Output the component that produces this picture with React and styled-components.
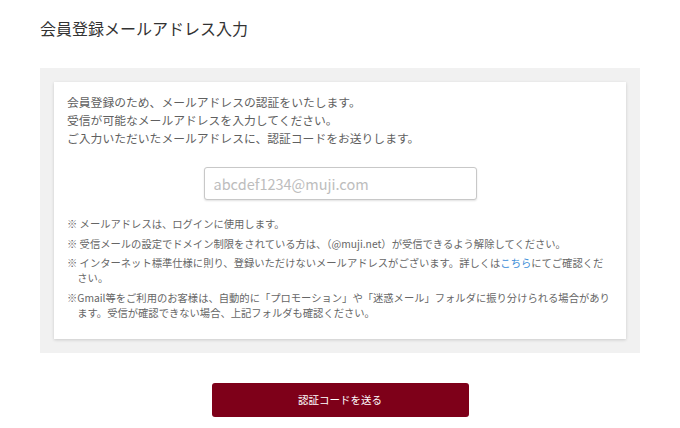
import React from "react";
import styled, { createGlobalStyle } from "styled-components";

const GlobalStyle = createGlobalStyle`
  html, body {
    margin: 0;
    padding: 0;
    background: #ffffff;
  }
  body {
    font-family: "Noto Sans CJK JP", "Noto Sans", sans-serif;
    color: #555555;
  }
`;

const Page = styled.div`
  width: 600px;
  padding: 16px 40px 0;
`;

const Title = styled.h1`
  margin: 0;
  font-size: 16px;
  line-height: 24px;
  font-weight: 400;
  color: #333333;
`;

const Panel = styled.section`
  margin-top: 28px;
  padding: 14px;
  background: #f1f1f1;
`;

const Card = styled.div`
  background: #ffffff;
  padding: 11px 10px 19px 13px;
  box-shadow: 0 1px 3px rgba(0, 0, 0, 0.16);
`;

const Lead = styled.p`
  margin: 0;
  font-size: 11.8px;
  line-height: 18px;
  color: #606060;
`;

const InputRow = styled.div`
  display: flex;
  justify-content: center;
  margin: 20px 3px 0 0;
`;

const EmailInput = styled.input`
  box-sizing: border-box;
  width: 273px;
  height: 33px;
  padding: 0 9px;
  border: 1px solid #c8c8c8;
  border-radius: 3px;
  box-shadow: 0 1px 2px rgba(0, 0, 0, 0.12);
  font-family: "Noto Sans CJK JP", "Noto Sans", sans-serif;
  font-size: 14.5px;
  color: #333;
  outline: none;

  &::placeholder {
    color: #bdbdbd;
  }
`;

const Notes = styled.ul`
  list-style: none;
  margin: 16px 0 0;
  padding: 0;
`;

const Note = styled.li`
  padding-left: 1em;
  text-indent: -1em;
  font-size: 10.3px;
  line-height: 15px;
  color: #666666;
  white-space: nowrap;
  margin-bottom: ${(p) => (p.$last ? 0 : "4.5px")};
`;

const Link = styled.a`
  color: #3c8dd8;
  text-decoration: none;
`;

const ButtonRow = styled.div`
  display: flex;
  justify-content: center;
  margin-top: 30px;
`;

const SubmitButton = styled.button`
  width: 257px;
  height: 34px;
  border: none;
  border-radius: 3px;
  background: #7e0019;
  color: #ffffff;
  font-family: "Noto Sans CJK JP", "Noto Sans", sans-serif;
  font-size: 10.5px;
  cursor: pointer;
`;

const App = () => {
  return (
    <>
      <GlobalStyle />
      <Page>
        <Title>会員登録メールアドレス入力</Title>
        <Panel>
          <Card>
            <Lead>
              会員登録のため、メールアドレスの認証をいたします。
              <br />
              受信が可能なメールアドレスを入力してください。
              <br />
              ご入力いただいたメールアドレスに、認証コードをお送りします。
            </Lead>
            <InputRow>
              <EmailInput type="email" placeholder="abcdef1234@muji.com" />
            </InputRow>
            <Notes>
              <Note>※ メールアドレスは、ログインに使用します。</Note>
              <Note>
                ※ 受信メールの設定でドメイン制限をされている方は、（@muji.net）が受信できるよう解除してください。
              </Note>
              <Note>
                ※ インターネット標準仕様に則り、登録いただけないメールアドレスがございます。詳しくは
                <Link href="#">こちら</Link>
                にてご確認くだ
                <br />
                さい。
              </Note>
              <Note $last>
                ※Gmail等をご利用のお客様は、自動的に「プロモーション」や「迷惑メール」フォルダに振り分けられる場合があり
                <br />
                ます。受信が確認できない場合、上記フォルダも確認ください。
              </Note>
            </Notes>
          </Card>
        </Panel>
        <ButtonRow>
          <SubmitButton type="button">認証コードを送る</SubmitButton>
        </ButtonRow>
      </Page>
    </>
  );
};

export default App;
